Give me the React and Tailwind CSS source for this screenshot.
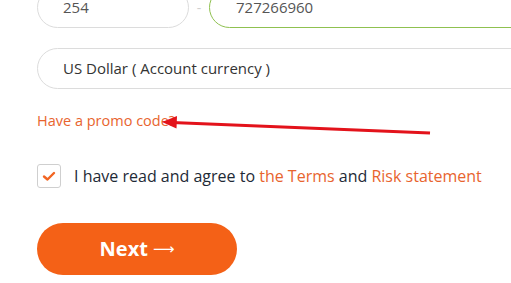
export default function App() {
  return (
    <div className="relative w-[511px] h-[283px] overflow-hidden bg-white font-['Open_Sans',sans-serif]">
      <div className="pl-[37px] -mt-[13px] w-[600px]">
        {/* phone */}
        <div className="flex items-center">
          <div className="w-[152px] h-[41px] rounded-full border border-[#dcdcdc] flex items-center pl-[25px] text-[15px] text-[#555]">
            254
          </div>
          <div className="w-[20px] flex justify-center text-[#d0d0d0] text-[14px]">-</div>
          <div className="w-[340px] h-[41px] rounded-full border border-[#8fc150] flex items-center pl-[26px] text-[15px] text-[#555]">
            727266960
          </div>
        </div>

        {/* currency */}
        <div className="mt-[20px] h-[41px] w-[520px] rounded-full border border-[#dcdcdc] flex items-center pl-[25px] text-[15px] text-[#333]">
          US Dollar ( Account currency )
        </div>

        <div className="mt-[22px] text-[14.5px] text-[#e8642e] leading-[20px]">Have a promo code?</div>

        <div className="mt-[33px] flex items-center">
          <div className="w-[24px] h-[24px] rounded-[3px] border border-[#cfcfcf] flex items-center justify-center">
            <svg width="14" height="11" viewBox="0 0 14 11" fill="none">
              <path d="M2 5.5 L5.5 8.5 L12 2" stroke="#f26522" strokeWidth="2.4" strokeLinecap="round" strokeLinejoin="round" />
            </svg>
          </div>
          <p className="ml-[13px] text-[16px] text-[#1e2a36]">
            I have read and agree to <span className="text-[#e8642e]">the Terms</span> and{" "}
            <span className="text-[#e8642e]">Risk statement</span>
          </p>
        </div>

        <button className="mt-[35px] w-[200px] h-[52px] rounded-full bg-[#f46117] text-white text-[20px] font-bold flex items-center justify-center gap-[5px]">
          <span>Next</span>
          <span className="font-['DejaVu_Sans',sans-serif] font-normal text-[15px] leading-none">⟶</span>
        </button>
      </div>

      <svg className="absolute left-0 top-0" width="511" height="283" viewBox="0 0 511 283">
        <line x1="430" y1="133" x2="172" y2="122.5" stroke="#e3131b" strokeWidth="3" />
        <path d="M162 122 L177 116 L176.5 128.5 Z" fill="#e3131b" />
      </svg>
    </div>
  );
}
